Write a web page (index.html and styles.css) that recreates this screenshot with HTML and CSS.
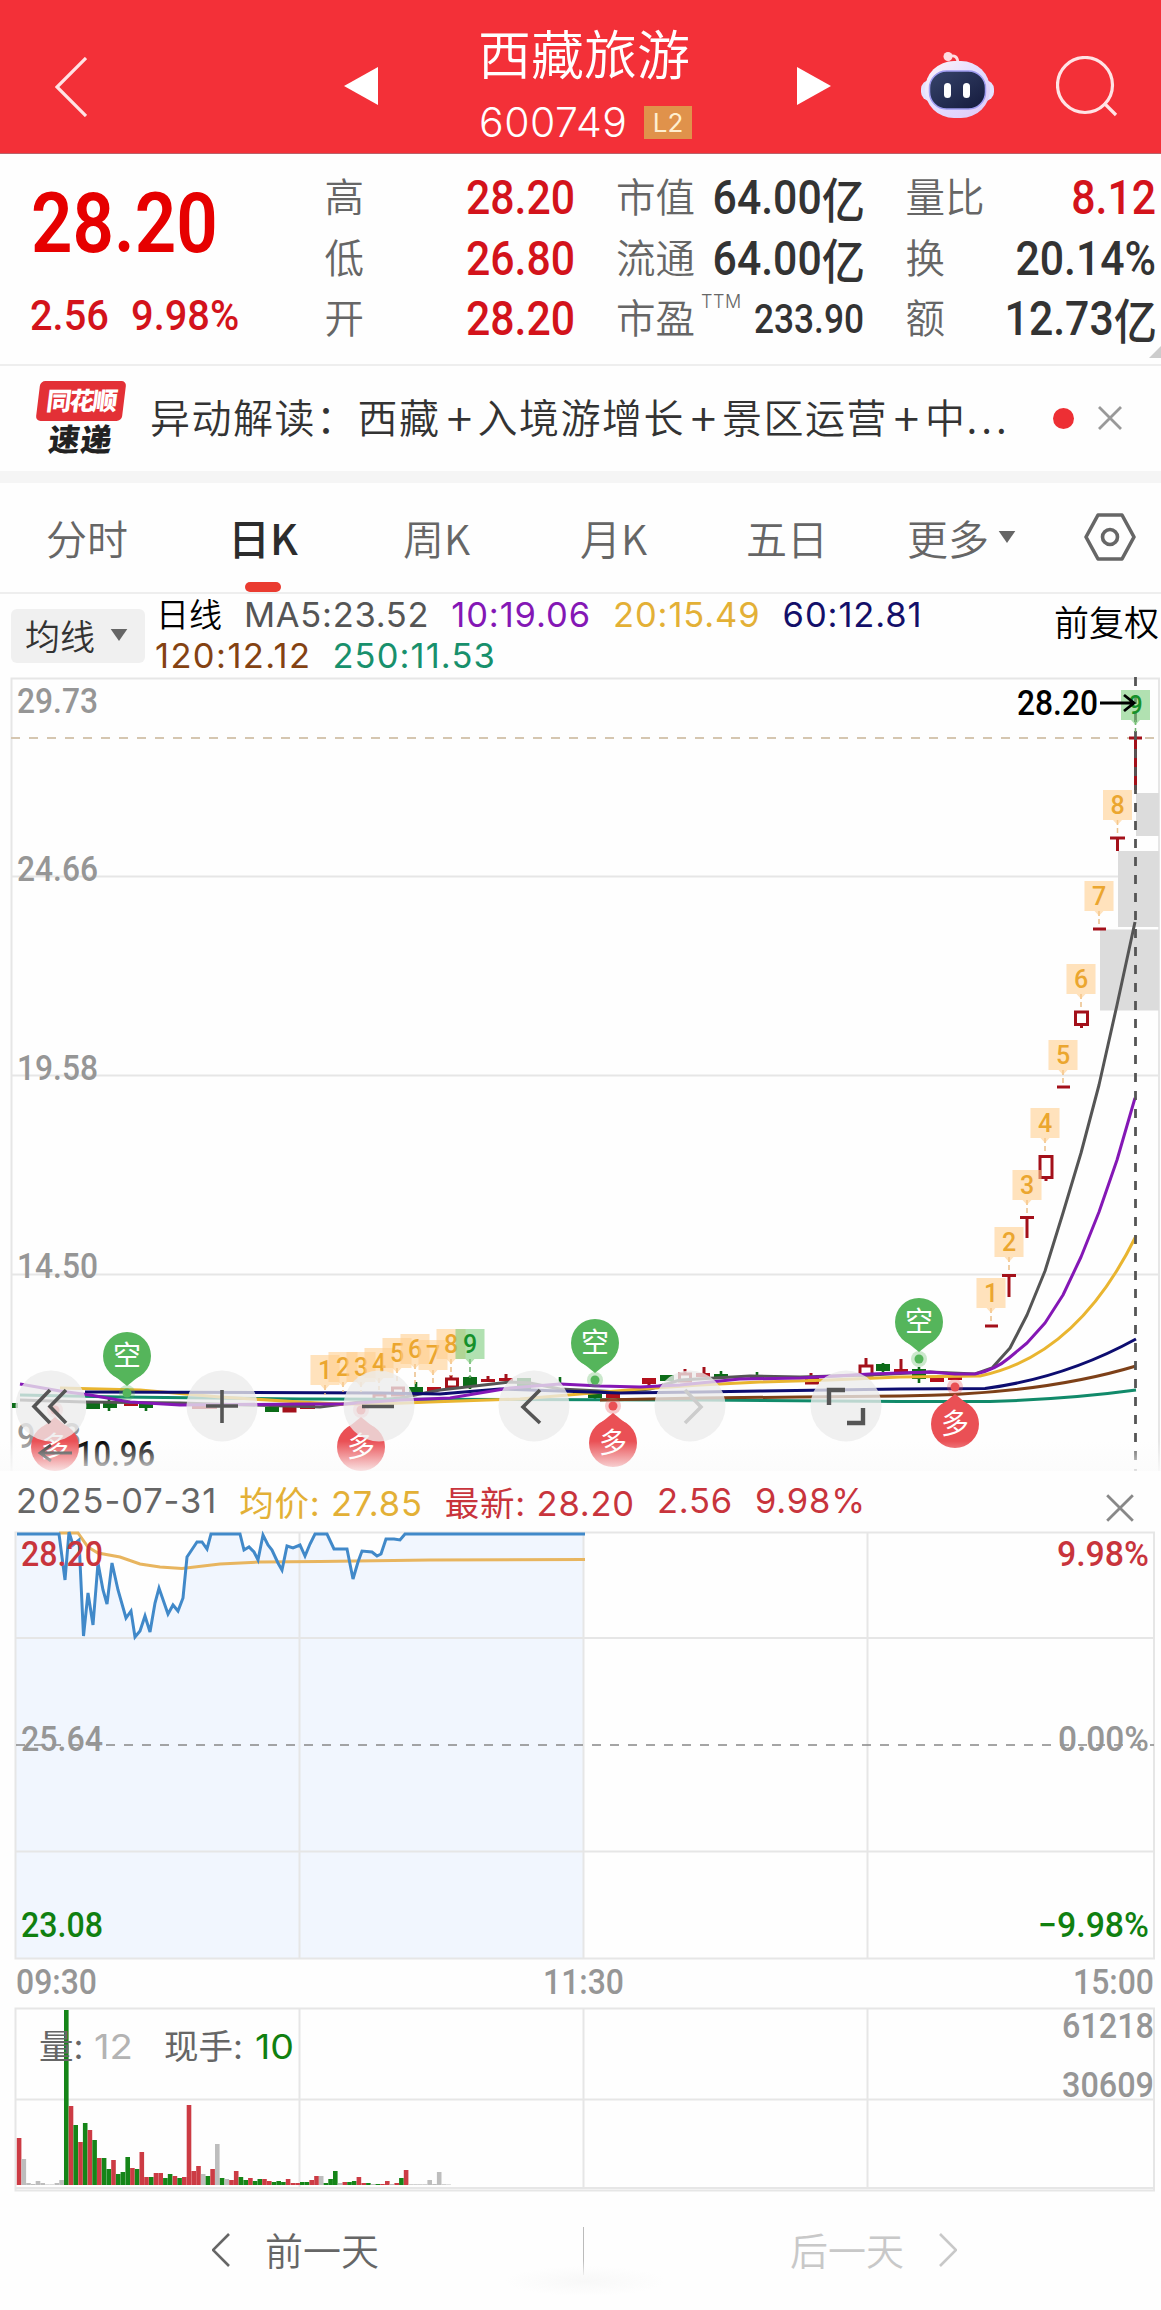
FILE: index.html
```html
<!DOCTYPE html>
<html lang="zh-CN">
<head>
<meta charset="utf-8">
<title>西藏旅游 600749</title>
<link rel="stylesheet" href="styles.css">
</head>
<body>
<header class="top">
  <svg class="back" viewBox="0 0 32 60"><path d="M31 1L2 30L31 59"/></svg>
  <svg class="tri prev" viewBox="0 0 34 38"><path d="M34 0V38L0 19Z"/></svg>
  <div class="title">
    <h1>西藏旅游</h1>
    <div class="code"><span>600749</span><b>L2</b></div>
  </div>
  <svg class="tri next" viewBox="0 0 34 38"><path d="M0 0V38L34 19Z"/></svg>
  <svg class="robot" viewBox="0 0 74 68">
    <defs><linearGradient id="rb" x1="0" y1="0" x2="1" y2="1"><stop offset="0" stop-color="#fff4f8"/><stop offset=".5" stop-color="#e3ddff"/><stop offset="1" stop-color="#dfc8f5"/></linearGradient>
    <linearGradient id="rf" x1="0" y1="0" x2="1" y2="1"><stop offset="0" stop-color="#37446b"/><stop offset="1" stop-color="#141a3c"/></linearGradient></defs>
    <path d="M28 6Q38 2 38 13" fill="none" stroke="#ffdce2" stroke-width="2.8"/><circle cx="28" cy="5.500" r="4.500" fill="#ffdce2"/>
    <rect x="1" y="29" width="73" height="21" rx="9" fill="#e4e2ff"/>
    <rect x="5" y="10" width="65" height="57" rx="29" fill="url(#rb)"/>
    <rect x="9.500" y="20" width="56" height="38" rx="17" fill="url(#rf)" stroke="#9f9cf0" stroke-width="1.5"/>
    <rect x="24" y="32" width="7" height="15" rx="3.5" fill="#fff"/><rect x="43" y="32" width="7" height="15" rx="3.5" fill="#fff"/>
  </svg>
  <svg class="search" viewBox="0 0 62 62"><circle cx="29" cy="29" r="27.5"/><path d="M48 47L60 59"/></svg>
</header>

<section class="quote">
  <div class="price"><strong>28.20</strong><p><span>2.56</span><span>9.98%</span></p></div>
  <dl>
    <div><dt>高</dt><dd class="up">28.20</dd></div>
    <div><dt>低</dt><dd class="up">26.80</dd></div>
    <div><dt>开</dt><dd class="up">28.20</dd></div>
  </dl>
  <dl>
    <div><dt>市值</dt><dd>64.00<i>亿</i></dd></div>
    <div><dt>流通</dt><dd>64.00<i>亿</i></dd></div>
    <div><dt>市盈<sup>TTM</sup></dt><dd class="small">233.90</dd></div>
  </dl>
  <dl>
    <div><dt>量比</dt><dd class="up">8.12</dd></div>
    <div><dt>换</dt><dd>20.14%</dd></div>
    <div><dt>额</dt><dd>12.73<i>亿</i></dd></div>
  </dl>
</section>

<section class="news">
  <div class="logo"><b>同花顺</b><em>速递</em></div>
  <p>异动解读：西藏<u>+</u>入境游增长<u>+</u>景区运营<u>+</u>中<s>...</s></p>
  <i class="dot"></i>
  <svg class="close" viewBox="0 0 24 24"><path d="M1 1L23 23M23 1L1 23"/></svg>
</section>

<nav class="tabs">
  <a>分时</a><a class="on">日K</a><a>周K</a><a>月K</a><a>五日</a>
  <a>更多<svg class="caret" viewBox="0 0 18 13"><path d="M0 0H18L9 13Z"/></svg></a>
  <svg class="gear" viewBox="0 0 52 48"><path d="M14 2H38L50 24L38 46H14L2 24Z"/><circle cx="26" cy="24" r="7.5"/></svg>
</nav>

<section class="ma">
  <button>均线<svg class="caret" viewBox="0 0 18 13"><path d="M0 0H18L9 13Z"/></svg></button>
  <div class="legend">
    <div><span class="k">日线</span><span class="m5">MA5:23.52</span><span class="m10">10:19.06</span><span class="m20">20:15.49</span><span class="m60">60:12.81</span></div>
    <div><span class="m120">120:12.12</span><span class="m250">250:11.53</span></div>
  </div>
  <span class="adj">前复权</span>
</section>

<svg class="kline" viewBox="0 677 1161 794">
  <g class="grid"><path d="M11.500 1471V678.500H1159V1471M12 876.500H1159M12 1075.500H1159M12 1274.500H1159"/></g>
  <g class="axis">
    <text x="17" y="713" textLength="81">29.73</text><text x="17" y="881" textLength="81">24.66</text>
    <text x="17" y="1080" textLength="81">19.58</text><text x="17" y="1278" textLength="81">14.50</text>
    <text x="17" y="1448" textLength="64">9.43</text>
  </g>
  <path class="gap" d="M1136 793h23v43h-23zM1118 851h41v76h-41zM1100 929.500h59v81h-59z"/>
  <path class="lastline" d="M11 738H1157"/>
  <g class="down">
    <path d="M12 1403h6v5h-6zM86 1401h14v8h-14zM103 1401h14v7h-14zM139 1403h14v5h-14zM265 1407h14v5h-14zM409 1387h14v6h-14zM463 1377h14v9h-14zM517 1378h14v12h-14zM660 1375h14v6h-14zM714 1374h14v4h-14zM750 1375h14v3h-14zM876 1364h14v7h-14zM912 1369h14v10h-14zM588 1394h14v4h-14zM573 1390h12v5h-12z"/>
    <path class="wick" d="M109 1398V1411M146 1402V1411M272 1404V1412M416 1382V1394M470 1376V1389M560 1377V1385M595 1393V1399M721 1371V1379M757 1372V1379M883 1363V1372M919 1367V1383"/>
  </g>
  <g class="up">
    <path d="M124 1402h14v4h-14zM192 1404h25v5h-25zM300 1405h15v4h-15zM427 1387h14v4h-14zM481 1379h14v3h-14zM499 1378h14v3h-14zM642 1378h14v6h-14zM696 1373h14v4h-14zM894 1369h14v3h-14zM930 1378h14v4h-14zM948 1377h14v3h-14zM606 1394h14v4h-14z"/>
    <path class="hollow" d="M284 1408h11v3h-11zM374 1395h11v5h-11zM392.500 1388h11v7h-11zM446.500 1379h11v8h-11zM679.500 1374h11v7h-11zM806.500 1378h11v5h-11zM860 1366h12v9h-12zM1040 1156.500h12v21h-12zM1075.500 1012h12v12.500h-12z"/>
    <path class="wick" d="M451 1375V1379M488 1376V1382M506 1374V1380M649 1382V1386M685 1369V1374M704 1367V1376M811 1373V1378M866 1358V1366M901 1359V1370M955 1373V1378M985 1326H998M1002 1275.500H1016M1009 1275V1297M1020 1217.500H1034M1027 1217V1238M1046 1178V1181M1057 1087H1070M1081.500 1025V1028M1093 929H1106M1110 838H1125M1117.500 838V851M1129 738H1142M1135.500 738V790"/>
  </g>
  <g class="ma-lines">
    <path stroke="#555" d="M20 1400L85 1402L180 1403L320 1407L360 1402L400 1398L440 1390L510 1382L530 1383L560 1389L620 1392L650 1389L680 1380L750 1376L800 1377L870 1375L930 1372L975 1374L992 1368L1010 1348L1027 1315L1045 1271L1063 1213L1081 1153L1099 1085L1117 1005L1135 922"/>
    <path stroke="#118a6a" d="M20 1395L120 1397L300 1399L700 1400L900 1401.500L990 1401.500Q1070 1399 1136 1390"/>
    <path stroke="#7d4018" d="M600 1400L700 1398L800 1397L900 1396Q1040 1395 1136 1366"/>
    <path stroke="#e9b530" d="M60 1388L140 1390L220 1397L300 1402L340 1404L380 1404L430 1402L520 1399L580 1394L640 1389L700 1385L760 1382L830 1380L900 1377L980 1376Q1077 1356 1136 1236"/>
    <path stroke="#0d0d70" d="M85 1392L380 1393L440 1394L500 1389L560 1391L620 1393L700 1392L760 1391L830 1390L900 1389L985 1388.500Q1065 1378 1136 1339"/>
    <path stroke="#8417b5" d="M20 1384L60 1391L90 1395L130 1402L180 1405L300 1404L345 1404L400 1400L450 1398L510 1388L560 1384L600 1386L640 1387L680 1385L740 1379L800 1378L870 1374L930 1372L955 1374L975 1374Q995 1370 1009 1358L1027 1343L1045 1323L1063 1295L1081 1257L1099 1212L1117 1160L1135 1098"/>
  </g>
  <path class="cursor" d="M1135.500 677V1471"/>
  <g class="tags" id="tags"></g>
  <g class="pins" id="pins"></g>
  <g class="peak"><text x="1017" y="715" textLength="81">28.20</text><path d="M1100 703H1134M1124 695L1134 703L1124 711"/></g>
  <g class="low"><path d="M72 1453H40M51 1445L40 1453L51 1461"/><text x="76" y="1466" textLength="79">10.96</text></g>
  <defs><linearGradient id="fade" x1="0" y1="0" x2="0" y2="1"><stop offset="0" stop-color="#fbfbfb" stop-opacity="0"/><stop offset="1" stop-color="#fbfbfb" stop-opacity=".85"/></linearGradient></defs>
  <rect x="0" y="1441" width="1161" height="30" fill="url(#fade)"/>
  <g class="tools">
    <circle cx="51" cy="1406" r="35.500"/><circle cx="222" cy="1406" r="35.500"/><circle cx="379" cy="1406" r="35.500"/><circle cx="534" cy="1406" r="35.500"/><circle cx="690" cy="1406" r="35.500"/><circle cx="846" cy="1406" r="35.500"/>
    <path d="M50 1390L34 1406.500L50 1423M66 1390L50 1406.500L66 1423M206 1406H238M222 1390V1423M362 1406.500H394M540 1390L523 1407L540 1423"/>
    <path class="off" d="M685 1390L701 1407L685 1423"/>
    <path class="thick" d="M829 1405V1390H845M847 1423H863V1408"/>
  </g>
</svg>

<section class="info">
  <span>2025-07-31</span><span class="avg">均价: 27.85</span><span class="new">最新: 28.20</span><span class="new">2.56</span><span class="new">9.98%</span>
  <svg class="close" viewBox="0 0 24 24"><path d="M1 1L23 23M23 1L1 23"/></svg>
</section>

<svg class="intraday" viewBox="0 1530 1161 476">
  <path class="area" d="M16 1958V1534H59L65 1580L69 1532L73 1545L79 1540L83.500 1636L88 1593L93 1625L98 1563L103 1590L107 1604L112 1563L118 1590L126 1618L131 1611L135 1637L140 1631L145 1616L150 1632L155 1603L159 1588L168 1614L173 1605L178 1611L183 1598L187 1557L193 1548L197 1542H202L207 1549L211 1534H240L244 1550L249 1547L254 1552L258 1560L263 1535L268 1545L272 1550L278 1563L282 1570L287 1546L293 1548L300 1545L305 1556L310 1544L315 1534H327L334 1549H347L353 1579L358 1562L362 1551L372 1552L377 1556L381 1554L386 1539H394L400 1540L405 1534H584V1958Z"/>
  <g class="grid"><path d="M15.500 1532.500H1154V1958.500H15.500ZM16 1638H1154M16 1851.500H1154M299.500 1532V1958M583.500 1532V1958M867.500 1532V1958"/></g>
  <path class="mid" d="M16 1745H1154"/>
  <path class="avgline" d="M59 1533H78L88 1547L98 1553L120 1557L140 1564L160 1567L182 1568.500L220 1564L260 1562L320 1561.500L430 1560L585 1559.500"/>
  <path class="last" d="M17 1534H59L65 1580L69 1532L73 1545L79 1540L83.500 1636L88 1593L93 1625L98 1563L103 1590L107 1604L112 1563L118 1590L126 1618L131 1611L135 1637L140 1631L145 1616L150 1632L155 1603L159 1588L168 1614L173 1605L178 1611L183 1598L187 1557L193 1548L197 1542H202L207 1549L211 1534H240L244 1550L249 1547L254 1552L258 1560L263 1535L268 1545L272 1550L278 1563L282 1570L287 1546L293 1548L300 1545L305 1556L310 1544L315 1534H327L334 1549H347L353 1579L358 1562L362 1551L372 1552L377 1556L381 1554L386 1539H394L400 1540L405 1534H585"/>
  <g class="axis">
    <text class="r" x="21" y="1566" textLength="82">28.20</text><text x="21" y="1751" textLength="82">25.64</text><text class="g" x="21" y="1937" textLength="82">23.08</text>
    <text class="r" x="1057" y="1566" textLength="92">9.98%</text><text x="1058" y="1751" textLength="91">0.00%</text><text class="g" x="1038" y="1937" textLength="111">−9.98%</text>
    <text x="16" y="1994" textLength="81">09:30</text><text x="543" y="1994" textLength="81">11:30</text><text x="1073" y="1994" textLength="81">15:00</text>
  </g>
</svg>

<svg class="volume" viewBox="0 2006 1161 188">
  <g class="grid"><path d="M15.500 2008.500H1154V2190.500H15.500ZM16 2099.500H1154M16 2188H1154M299.500 2008V2189M583.500 2008V2189M867.500 2008V2189"/></g>
  <g id="bars"></g>
  <g class="caption">
    <text x="39" y="2059">量:</text><text class="flat" x="94" y="2059" textLength="39">12</text>
    <text x="164" y="2059">现手:</text><text class="sell" x="255" y="2059" textLength="39">10</text>
  </g>
  <g class="axis"><text x="1062" y="2038" textLength="92">61218</text><text x="1062" y="2097" textLength="92">30609</text></g>
</svg>

<footer>
  <a><svg viewBox="0 0 18 34"><path d="M17 1L1 17L17 33"/></svg><span>前一天</span></a>
  <i></i>
  <a class="off"><span>后一天</span><svg viewBox="0 0 18 34"><path d="M1 1L17 17L1 33"/></svg></a>
</footer>
<script src="chart.js"></script>
</body>
</html>
```
FILE: styles.css
```css
* { box-sizing: border-box; margin: 0; padding: 0; }
body { width: 1161px; height: 2310px; overflow: hidden; background: #fefefe; color: #333;
  font-family: Inter, "Noto Sans CJK SC", sans-serif; font-weight: 400; }
svg { display: block; flex: none; }
i, em { font-style: normal; }

.top { height: 154px; background: #f33038; display: flex; align-items: flex-start; border-bottom: 1px solid #b9626a; color: #fff; }
.top svg { fill: none; stroke: #ffe3e5; stroke-width: 3.2; }
.back { width: 32px; height: 60px; margin: 57px 0 0 55px; }
.top .tri { width: 34px; height: 38px; fill: #fff; stroke: none; }
.prev { margin: 67px 0 0 257px; }
.title { width: 214px; margin-left: 100px; }
.title h1 { font: 350 53px/60px "Noto Sans CJK SC", sans-serif; margin-top: 22px; white-space: nowrap; }
.code { display: flex; gap: 14px; margin-top: 24px; height: 33px; align-items: center; }
.code span { font-size: 41px; font-weight: 350; line-height: 31px; width: 152px; padding-left: 1px; letter-spacing: .5px; }
.code b { width: 48px; height: 33px; background: #e0924b; color: #ffefd0; font-size: 26px; line-height: 33px; font-weight: 400; text-align: center; }
.next { margin: 67px 0 0 105px; }
.top .robot { width: 74px; height: 68px; margin: 51px 0 0 89px; stroke: none; }
.search { width: 62px; height: 62px; margin: 56px 0 0 62px; }

.quote { height: 212px; display: grid; grid-template-columns: 249px 250px 248px 250px; column-gap: 41.500px; padding: 14px 0 0 34px; border-bottom: 2px solid #eee; position: relative; }
.quote::after { content: ""; position: absolute; right: 0; bottom: 6px; border: 6px solid; border-color: transparent #ccc #ccc transparent; }
.price { color: #e60000; font-family: Roboto, sans-serif; }
.price strong { display: block; font-size: 84px; line-height: 100px; font-weight: 600; transform: scaleX(.865); transform-origin: 0 0; margin: 6px 0 0 -3px; }
.price p { display: flex; gap: 24px; font-size: 43px; line-height: 50px; font-weight: 500; color: #d3131b; transform: scaleX(.925); transform-origin: 0 0; margin: 16px 0 0 -4px; }
.quote dl > div { height: 60.500px; display: flex; justify-content: space-between; align-items: center; white-space: nowrap; }
.quote dt { font: 350 39.500px/60px "Noto Sans CJK SC", sans-serif; color: #666; position: relative; top: -3px; flex: none; }
.quote sup { position: absolute; left: 100%; top: 4px; margin-left: 6px; font: 300 18px/24px Inter, sans-serif; letter-spacing: .5px; }
.quote dd { font: 500 47.500px/58px Roboto, sans-serif; transform: scaleX(.9); transform-origin: 100% 50%; color: #333; width: 0; display: flex; justify-content: flex-end; }
.quote dd i { font: 500 48px/56px "Noto Sans CJK SC", sans-serif; margin-right: -1px; }
.quote dd.up { color: #d3131b; }
.quote dd.small { font-size: 41px; transform: scaleX(.86); }

.news { height: 105px; display: flex; align-items: center; padding-left: 37px; }
.logo { width: 88px; text-align: center; margin-top: -2px; }
.logo b { display: block; width: 86px; margin: 0 1px; height: 40px; background: #e33036; color: #fff; border-radius: 5px; transform: skewX(-7deg); font: 900 25px/37px "Noto Sans CJK SC", sans-serif; letter-spacing: -2px; }
.logo em { display: block; font: 900 31px/34px "Noto Sans CJK SC", sans-serif; transform: skewX(-7deg); color: #222; letter-spacing: 1px; }
.news p { width: 858px; margin: -5px 0 0 25px; font: 350 40px/60px "Noto Sans CJK SC", sans-serif; letter-spacing: 1.500px; color: #333; white-space: nowrap; }
.news u { text-decoration: none; display: inline-block; width: 37px; text-align: center; letter-spacing: 0; transform: scale(1.15); }
.news s { text-decoration: none; letter-spacing: 4px; }
.dot { width: 21px; height: 21px; border-radius: 50%; background: #ed2f34; margin: -1px 0 0 45px; }
.close { width: 24px; height: 24px; fill: none; stroke: #999; stroke-width: 2.8; }
.news .close { margin: -1px 0 0 24px; }

.tabs { height: 123px; border-top: 12px solid #f5f5f5; border-bottom: 2px solid #eee; display: flex; align-items: center; padding-left: 46px;
  font: 350 41px/60px "Noto Sans CJK SC", sans-serif; color: #666; }
.tabs a { display: flex; align-items: center; height: 109px; padding-bottom: 2px; position: relative; width: 182px; white-space: nowrap; }
.tabs a:nth-child(2) { width: 175px; }
.tabs a:nth-child(3) { width: 177px; }
.tabs a:nth-child(4) { width: 166px; }
.tabs a:nth-child(5) { width: 161px; }
.tabs a:nth-child(6) { width: 177px; }
.tabs .on { color: #2c2c2c; font-weight: 500; font-size: 42px; }
.on::after { content: ""; position: absolute; left: 17px; bottom: 0; width: 36px; height: 10px; border-radius: 5px; background: #ea3b30; }
.caret { width: 18px; height: 12px; fill: #666; margin-left: 9px; }
.gear { width: 52px; height: 48px; fill: none; stroke: #666; stroke-width: 3.6; stroke-linejoin: round; margin-top: -1px; }

.ma { height: 83px; display: flex; align-items: flex-start; padding: 0 3px 0 11px; }
.ma button { width: 134px; height: 54px; margin-top: 15px; border: 0; border-radius: 6px; background: #f0f0f0; color: #333; font: 350 35px/48px "Noto Sans CJK SC", sans-serif; display: flex; align-items: center; padding: 0 0 3px 14px; }
.ma button .caret { margin-left: 15px; }
.legend { margin-left: 10px; flex: 1; font-size: 34.500px; }
.legend div { display: flex; height: 42px; align-items: center; gap: 22px; white-space: nowrap; }
.legend div:first-child { height: 40px; }
.k { font: 350 33px/38px "Noto Sans CJK SC", sans-serif; color: #000; margin: -3px 0 0 1px; }
.m5 { color: #555; letter-spacing: .7px; } .m10 { color: #8417b5; } .m20 { color: #e3b036; } .m60 { color: #130f69; } .m120 { color: #844212; } .m250 { color: #18906c; }
.m10, .m20, .m60 { letter-spacing: .9px; } .m120 { letter-spacing: 1.400px; } .m250 { letter-spacing: 1.100px; margin-left: -1px; }
.adj { font: 350 35px/50px "Noto Sans CJK SC", sans-serif; color: #000; margin: 2px -1px 0 0; }

.kline { width: 1161px; height: 794px; }
.grid path { fill: none; stroke: #e6e6e6; stroke-width: 2; }
text { font-family: Roboto, "Noto Sans CJK SC", sans-serif; }
.axis text { font-size: 35px; font-weight: 500; fill: #969696; }
.axis text.r { fill: #c8343c; }
.axis text.g { fill: #108010; }
.gap { fill: #dcdcdc; }
.lastline { stroke: #d5c6b0; stroke-width: 2; stroke-dasharray: 9 9; }
.down { fill: #0c6c18; } .down .wick { stroke: #0c6c18; stroke-width: 2.6; }
.kline .up { fill: #b3101c; } .up .wick, .up .hollow { stroke: #a3101a; stroke-width: 3; fill: #fff; }
.ma-lines { fill: none; stroke-width: 3; stroke-linejoin: round; }
.cursor { stroke: #555; stroke-width: 2.8; stroke-dasharray: 9 9; }
.tags text { text-anchor: middle; font-size: 25px; font-weight: 500; }
.pins text { text-anchor: middle; font: 400 28px "Noto Sans CJK SC", sans-serif; fill: #fff; }
.peak text, .low text { font-size: 35px; font-weight: 500; }
.peak path, .low path { fill: none; stroke: #000; stroke-width: 2.8; }
.low path { stroke: #333; }
.tools circle { fill: #ececec; fill-opacity: .78; }
.tools path { fill: none; stroke: #555; stroke-width: 3.6; }
.tools .off { stroke: #ccc; } .tools .thick { stroke-width: 4.4; }

.info { height: 59px; display: flex; align-items: center; gap: 22px; padding: 0 27px 0 16px; font-size: 34.500px; font-weight: 400; letter-spacing: .9px; color: #666; white-space: nowrap; }
.avg { color: #e3b036; } .new { color: #c8343c; }
.info .avg, .info .new { letter-spacing: .8px; }
.info .close { width: 28px; height: 28px; margin-left: auto; margin-top: 14px; stroke: #888; stroke-width: 2.4; }
.intraday { width: 1161px; height: 476px; }
.area { fill: #f1f6fe; }
.mid { stroke: #888; stroke-width: 1.6; stroke-dasharray: 9 9; }
.avgline { fill: none; stroke: #e8b55f; stroke-width: 3; }
.last { fill: none; stroke: #4189c9; stroke-width: 3; }
.volume { width: 1161px; height: 188px; }
.caption text { font: 400 34.500px Inter, "Noto Sans CJK SC", sans-serif; fill: #666; }
.caption .flat { fill: #b3b3b3; } .caption .sell { fill: #108010; }

footer { height: 116px; display: flex; align-items: flex-start; padding-top: 33px; font: 350 38px/48px "Noto Sans CJK SC", sans-serif; color: #666; background: radial-gradient(closest-side, #f8f8f8, #fefefe) 505px 72px / 160px 30px no-repeat; }
footer a { display: flex; align-items: center; gap: 35px; padding-left: 212px; width: 583px; height: 48px; }
footer span { margin-top: -4px; }
footer a.off { color: #c8c8c8; padding-left: 206px; width: 577px; }
footer i { width: 1px; height: 48px; background: linear-gradient(#bbb 70%, #eee); }
footer svg { width: 18px; height: 34px; margin-top: -2px; fill: none; stroke: currentColor; stroke-width: 2.6; }
```
FILE: chart.js
```js
const draw = (id, html) => { document.getElementById(id).innerHTML = html; };

// Volume bars: colour key and height, one entry per minute from 09:30.
const colours = { r: '#cc3b44', g: '#158518', n: '#bdbdbd' };
const volume = 'r47 n26 n2 n1 n4 n2 n.5 n.5 n2 n5 g175 r79 g60 r43 g62 r55 g45 r27 g27 g16 r25 g11 g13 g28 r17 g16 r33 r8 g8 r12 r12 g7 g11 r9 g7 r8 r80 r14 r19 n11 g9 r16 n41 g7 n6 r5 r14 g8 g5 r7 g4 g6 r6 r4 g3 g4 g3 r6 r2 r2 g3 g3 r5 r9 n9 g2 g6 g14 n2 r3 g3 g4 r8 r2 g2 n1 g1 r1 r4 n1 r2 g7 r15 n.7 n.7 n.7 n.7 n5 n1 n13 n.7 n.5'.split(' ');
draw('bars', volume.map((v, i) => {
  const h = +v.slice(1);
  return `<rect x="${(16.8 + i * 4.72).toFixed(1)}" y="${2185 - h}" width="4.6" height="${h}" fill="${colours[v[0]]}"/>`;
}).join(''));

// Sequence tags: digit, centre x, top y, stem end y.
const tags = [
  [1, 325, 1355, 1395], [2, 343, 1352, 1392], [3, 361, 1352, 1392], [4, 379, 1348, 1390], [5, 397, 1338, 1384],
  [6, 415, 1334, 1384], [7, 433, 1340, 1385], [8, 451, 1329, 1376], [9, 470, 1329, 1378],
  [1, 991, 1278, 1321], [2, 1009, 1227, 1271], [3, 1027, 1170, 1213], [4, 1045, 1108, 1151], [5, 1063, 1040, 1083],
  [6, 1081, 964, 1007], [7, 1099, 881, 924], [8, 1117.5, 790, 833], [9, 1135.5, 690, 732]
];
draw('tags', tags.map(([n, x, y, e]) => {
  const green = n === 9;
  return `<path d="M${x} ${y + 30}V${e}" stroke="${green ? '#70b070' : '#eabf88'}" stroke-width="1.5" stroke-dasharray="5 3"/>` +
    `<path d="M${x - 14.5} ${y}h29v30h-10l-4.500 5l-4.500 -5h-10z" fill="${green ? '#78cc78' : '#ffcd8c'}" fill-opacity=".58"/>` +
    `<text x="${x}" y="${y + 24}" fill="${green ? '#15902a' : '#eba62f'}">${n}</text>`;
}).join(''));

// Signal pins: label, centre x, centre y, direction of the tail.
const pins = [['空', 127, 1356, 1], ['空', 595, 1343, 1], ['空', 919, 1322, 1], ['多', 55, 1447, -1], ['多', 361, 1447, -1], ['多', 613, 1443, -1], ['多', 955, 1424, -1]];
draw('pins', pins.map(([t, x, y, d]) => {
  const c = d > 0 ? '#55b55b' : '#ea5055';
  return `<circle cx="${x}" cy="${y}" r="24" fill="${c}"/><path d="M${x - 16} ${y + 17 * d}L${x} ${y + 30 * d}L${x + 16} ${y + 17 * d}Z" fill="${c}"/>` +
    `<circle cx="${x}" cy="${y + 37 * d}" r="8" fill="${c}" fill-opacity=".3"/><circle cx="${x}" cy="${y + 37 * d}" r="4.500" fill="${c}"/>` +
    `<text x="${x}" y="${y + 10}">${t}</text>`;
}).join(''));

// Axis digits are condensed to their column width.
document.querySelectorAll('[textLength]').forEach(t => t.setAttribute('lengthAdjust', 'spacingAndGlyphs'));
```
